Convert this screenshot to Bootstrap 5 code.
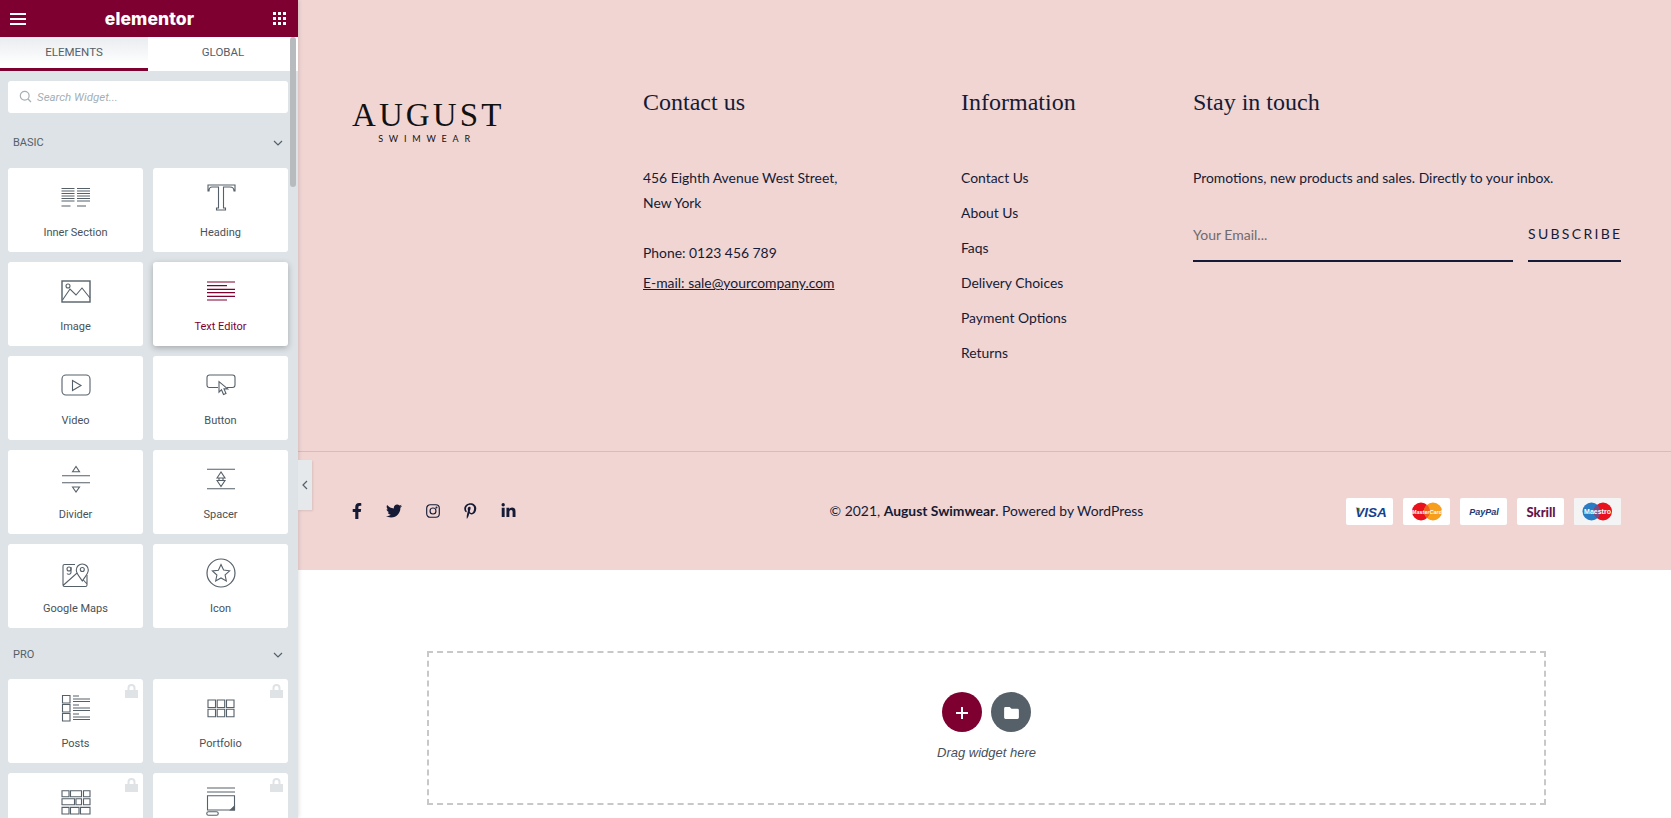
<!DOCTYPE html>
<html lang="en">
<head>
  <meta charset="UTF-8" />
  <meta name="viewport" content="width=device-width, initial-scale=1" />
  <title>Elementor - August Swimwear</title>
  <link href="https://cdn.jsdelivr.net/npm/bootstrap@5.3.0/dist/css/bootstrap.min.css" rel="stylesheet" />
  <style>
    html, body { height: 100%; overflow: hidden; background: #fff; }

    /* Editor panel */
    .ed-panel { width: 298px; background: #dee3e7; font-family: Roboto, sans-serif; color: #556068; box-shadow: 1px 0 4px rgba(0,0,0,.12); z-index: 2; }
    .ed-head { height: 37px; background: #7e0030; color: #fff; padding: 0 12px 0 10px; }
    .ed-logo { font-family: Inter, sans-serif; font-weight: 800; font-size: 17.5px; letter-spacing: .1px; line-height: 1; }
    .ed-tabs .nav-link { height: 34px; padding: 0; line-height: 31px; font-size: 11.5px; color: #556068; background: #fff; border-radius: 0; }
    .ed-tabs .ed-tab-on { background: linear-gradient(#e9ecef, #fff 90%); border-bottom: 3px solid #7e0030; }
    .ed-tab-a { width: 148px; }
    .ed-tab-b { width: 150px; }
    .ed-search { margin: 10px 10px 0 8px; height: 32px; }
    .ed-search svg { position: absolute; left: 11px; top: 9px; }
    .ed-search .form-control { height: 32px; border: 0; border-radius: 3px; padding: 0 0 0 29px; font-size: 11.5px; font-style: italic; }
    .ed-search .form-control::placeholder { color: #a4afb7; opacity: 1; }
    .ed-cat { height: 55px; padding: 5px 15px 0 13px; font-size: 11px; color: #556068; }
    .ed-cat-pro { height: 51px; padding-top: 3px; }
    .ed-grid { display: grid; grid-template-columns: 135px 135px; gap: 10px; padding-left: 8px; }
    .ed-widget { height: 84px; background: #fff; border-radius: 3px; padding-top: 14px; text-align: center; font-size: 11px; color: #495157; position: relative; }
    .ed-widget svg.ed-ico { display: block; margin: 0 auto 13px; fill: none; stroke: #556068; stroke-width: 1.1; }
    .ed-widget.ed-hot { color: #7e0030; box-shadow: 0 2px 6px rgba(0,0,0,.25); }
    .ed-widget.ed-hot svg.ed-ico { stroke: #7e0030; }
    .ed-lock { position: absolute; top: 5px; right: 5px; }
    .ed-scroll { position: absolute; left: 290px; top: 37px; width: 6px; height: 150px; border-radius: 3px; background: #b7bbbe; z-index: 4; }
    .ed-toggle { position: absolute; left: 298px; top: 460px; width: 14px; height: 50px; background: #e6e9ec; box-shadow: 1px 1px 2px rgba(0,0,0,.1); z-index: 3; }

    /* Site footer */
    .site-main { min-width: 0; }
    .site-foot { height: 570px; background: #f0d5d3; color: #151b36; font-family: Lato, sans-serif; font-size: 13.9px; }
    .site-cols { height: 452px; padding: 87px 50px 0 54px; border-bottom: 1px solid #dfb9b7; }
    .site-col-a { width: 291px; }
    .site-col-b { width: 318px; }
    .site-col-c { width: 232px; }
    .site-col-d { width: 428px; }
    .site-brand { margin-top: 13px; width: 150px; color: #111; text-align: center; font-family: "Liberation Serif", serif; }
    .site-brand b { display: block; font-weight: 400; font-size: 33px; line-height: 30px; letter-spacing: 3.1px; white-space: nowrap; }
    .site-brand span { display: block; font-family: Lato, sans-serif; font-size: 9px; line-height: 12px; letter-spacing: 5.8px; margin-top: 3px; }
    .site-h { font-family: "Liberation Serif", serif; font-size: 24px; line-height: 30px; font-weight: 400; margin: 0 0 48px; white-space: nowrap; }
    .site-foot p { line-height: 25px; margin: 0; }
    .site-foot a { color: inherit; }
    .site-foot .site-phone { margin-top: 25px; }
    .site-foot .site-mail { margin-top: 5px; }
    .site-links a { display: block; height: 35px; line-height: 25px; text-decoration: none; }
    .site-form { margin-top: 27px; gap: 15px; }
    .site-email { width: 320px; height: 45px; border-bottom: 2px solid #151b36; }
    .site-email .form-control { background: transparent; border: 0; border-radius: 0; padding: 0; height: 35px; font-size: 14px; color: #151b36; box-shadow: none; }
    .site-email .form-control::placeholder { color: #6f6a6d; opacity: 1; }
    .site-sub { width: 93px; height: 45px; border: 0; border-bottom: 2px solid #151b36; border-radius: 0; padding: 0 0 10px; font-size: 14px; letter-spacing: 2.3px; color: #151b36; text-align: left; white-space: nowrap; font-family: Lato, sans-serif; }
    .site-bar { height: 118px; padding: 0 50px 0 54px; }
    .site-third { flex: 1 1 0; }
    .site-social { gap: 24px; }
    .site-social svg { display: block; height: 16px; fill: #151b36; }
    .site-soc-f { width: 10px; }
    .site-soc-t { width: 16px; }
    .site-soc-i { width: 14px; fill: none !important; stroke: #151b36; stroke-width: 1.3; }
    .site-soc-p { width: 12.5px; }
    .site-soc-l { width: 15px; }
    .site-pays { gap: 10px; }
    .site-pay { width: 47px; height: 27px; background: #fff; border-radius: 2px; overflow: hidden; }
    .site-pay svg { display: block; }

    /* Drop zone */
    .drop-wrap { padding: 81px 125px 0 129px; }
    .drop-zone { height: 154px; border: 2px dashed #c8c8c8; padding-top: 39px; text-align: center; font-family: "Liberation Sans", sans-serif; font-style: italic; font-size: 13px; color: #495157; }
    .drop-btns { gap: 9px; }
    .drop-btn { width: 40px; height: 40px; padding: 0; border: 0; }
    .drop-add { background: #7e0030; }
    .drop-tpl { background: #556068; }
    .drop-zone p { margin: 13px 0 0; line-height: 16px; }
  </style>
</head>
<body class="d-flex">
  <!-- Editor panel -->
  <aside class="ed-panel flex-shrink-0 h-100 overflow-hidden">
    <div class="ed-head d-flex align-items-center justify-content-between">
      <svg width="16" height="14" viewBox="0 0 16 14" fill="#fff"><rect y="1" width="16" height="2"/><rect y="6" width="16" height="2"/><rect y="11" width="16" height="2"/></svg>
      <span class="ed-logo">elementor</span>
      <svg width="13" height="13" viewBox="0 0 13 13" fill="#fff"><rect width="3" height="3"/><rect x="5" width="3" height="3"/><rect x="10" width="3" height="3"/><rect y="5" width="3" height="3"/><rect x="5" y="5" width="3" height="3"/><rect x="10" y="5" width="3" height="3"/><rect y="10" width="3" height="3"/><rect x="5" y="10" width="3" height="3"/><rect x="10" y="10" width="3" height="3"/></svg>
    </div>
    <ul class="nav ed-tabs">
      <li class="nav-item ed-tab-a"><a class="nav-link ed-tab-on text-center" href="#">ELEMENTS</a></li>
      <li class="nav-item ed-tab-b"><a class="nav-link text-center" href="#">GLOBAL</a></li>
    </ul>
    <div class="ed-search position-relative">
      <svg width="13" height="13" viewBox="0 0 13 13" fill="none" stroke="#a4afb7" stroke-width="1.2"><circle cx="5.7" cy="5.7" r="4.4"/><path d="M9 9l3 3"/></svg>
      <input class="form-control" placeholder="Search Widget..." />
    </div>
    <div class="ed-cat d-flex align-items-center justify-content-between">BASIC
      <svg width="10" height="6" viewBox="0 0 10 6" fill="none" stroke="#556068" stroke-width="1.2"><path d="M1 1l4 4 4-4"/></svg>
    </div>
    <div class="ed-grid">
      <div class="ed-widget">
        <svg class="ed-ico" width="30" height="30" viewBox="0 0 30 30"><path d="M.5 6.500h13M.5 9h13M.5 11.500h13M.5 14h13M.5 16.500h13M.5 19h13M.5 24h9M16 6.500h13M16 9h13M16 11.500h13M16 14h13M16 16.500h13M16 19h13M16 24h9"/></svg>
        Inner Section
      </div>
      <div class="ed-widget">
        <svg class="ed-ico" width="30" height="30" viewBox="0 0 30 30"><path d="M2 3h27v6h-1c0-2.500-1.500-4-4-4h-6.500v21h2v2h-9v-2h2V5H6C3.500 5 3 6.500 3 9H2z"/></svg>
        Heading
      </div>
      <div class="ed-widget">
        <svg class="ed-ico" width="30" height="30" viewBox="0 0 30 30"><rect x="1" y="5" width="28" height="21" stroke-width="1.4"/><circle cx="7" cy="10" r="2"/><path d="M1.500 24L9 13l6 6 6-7 8 10"/></svg>
        Image
      </div>
      <div class="ed-widget ed-hot">
        <svg class="ed-ico" width="30" height="30" viewBox="0 0 30 30"><path d="M1 6h28M1 9.700h20M1 13.300h28M1 16.700h28M1 20.300h28M1 24h20" stroke-width="1.2"/></svg>
        Text Editor
      </div>
      <div class="ed-widget">
        <svg class="ed-ico" width="30" height="30" viewBox="0 0 30 30"><rect x="1" y="5" width="28" height="20" rx="4"/><path d="M11.500 10.500l8.500 5-8.500 5z"/></svg>
        Video
      </div>
      <div class="ed-widget">
        <svg class="ed-ico" width="30" height="30" viewBox="0 0 30 30"><path d="M12 17.500H3.500A2.500 2.500 0 0 1 1 15V7.500A2.500 2.500 0 0 1 3.500 5h23A2.500 2.500 0 0 1 29 7.500V15a2.500 2.500 0 0 1-2.500 2.500H21"/><path d="M13 11.700v10.500l2.500-2.500 2 4.800 2.500-1-2-4.600h3.700z"/></svg>
        Button
      </div>
      <div class="ed-widget">
        <svg class="ed-ico" width="30" height="30" viewBox="0 0 30 30"><path d="M1 11.700h28M1 18.700h28M11.500 7.700L15 2.500l3.500 5.200zM11.500 23L15 28l3.500-5z"/></svg>
        Divider
      </div>
      <div class="ed-widget">
        <svg class="ed-ico" width="30" height="30" viewBox="0 0 30 30"><path d="M1 5.300h28M1 24.700h28M11 14l4-6 4 6zM11 16.500l4 6 4-6zM13 14h4v2.500h-4z"/></svg>
        Spacer
      </div>
      <div class="ed-widget">
        <svg class="ed-ico" width="30" height="30" viewBox="0 0 30 30"><path d="M14 6.500H3.500A1.500 1.500 0 0 0 2 8v19a1.500 1.500 0 0 0 1.500 1.500h21A1.500 1.500 0 0 0 26 27V17M2 27.500l14-12.500 10 11"/><circle cx="8" cy="11" r="2"/><path d="M10 9v5.500c0 2-3 2.200-4 1"/><path d="M21.300 23c-3-4.500-6-7.500-6-11a6 6 0 0 1 12 0c0 3.500-3 6.500-6 11z" fill="#fff"/><circle cx="21.300" cy="11.500" r="2"/></svg>
        Google Maps
      </div>
      <div class="ed-widget">
        <svg class="ed-ico" width="30" height="30" viewBox="0 0 30 30"><circle cx="15" cy="15" r="14" stroke-width="1.200"/><path d="M15 6.500l2.600 5.600 6 .7-4.500 4.100 1.200 6L15 20l-5.300 3 1.200-6-4.500-4.100 6-.7z"/></svg>
        Icon
      </div>
    </div>
    <div class="ed-cat ed-cat-pro d-flex align-items-center justify-content-between">PRO
      <svg width="10" height="6" viewBox="0 0 10 6" fill="none" stroke="#556068" stroke-width="1.2"><path d="M1 1l4 4 4-4"/></svg>
    </div>
    <div class="ed-grid">
      <div class="ed-widget">
        <svg class="ed-lock" width="13" height="14" viewBox="0 0 13 14" fill="#dfe3e6"><path d="M2.500 6V4a4 4 0 0 1 8 0v2H13v8H0V6zm2 0h4V4a2 2 0 0 0-4 0z"/></svg>
        <svg class="ed-ico" width="30" height="30" viewBox="0 0 30 30"><path d="M1.500 2.500h7.500v7.500H1.500zM1.500 11.500h7.500v7.500H1.500zM1.500 20.500h7.500v7.500H1.500zM12 3h6M12 6h17M12 8.500h17M12 12h6M12 15h17M12 17.500h17M12 21h6M12 24h17M12 26.500h17"/></svg>
        Posts
      </div>
      <div class="ed-widget">
        <svg class="ed-lock" width="13" height="14" viewBox="0 0 13 14" fill="#dfe3e6"><path d="M2.500 6V4a4 4 0 0 1 8 0v2H13v8H0V6zm2 0h4V4a2 2 0 0 0-4 0z"/></svg>
        <svg class="ed-ico" width="30" height="30" viewBox="0 0 30 30"><path d="M2 7h7.500v7.500H2zM11.200 7h7.500v7.500h-7.500zM20.500 7H28v7.500h-7.500zM2 16.200h7.500v7.500H2zM11.200 16.200h7.500v7.500h-7.500zM20.500 16.200H28v7.500h-7.500z"/></svg>
        Portfolio
      </div>
      <div class="ed-widget">
        <svg class="ed-lock" width="13" height="14" viewBox="0 0 13 14" fill="#dfe3e6"><path d="M2.500 6V4a4 4 0 0 1 8 0v2H13v8H0V6zm2 0h4V4a2 2 0 0 0-4 0z"/></svg>
        <svg class="ed-ico" width="30" height="30" viewBox="0 0 30 30"><path d="M1 3.700h7v6H1zM9.500 3.700h11v6h-11zM22.500 3.700H29v6h-6.500zM1 11.700h12.500v6H1zM15 11.700h5.500v6H15zM22.500 11.700H29v6h-6.500zM1 20.400h7V27H1zM9.500 20.400H18V27H9.500zM19.500 20.400H29V27h-9.500z"/></svg>
      </div>
      <div class="ed-widget">
        <svg class="ed-lock" width="13" height="14" viewBox="0 0 13 14" fill="#dfe3e6"><path d="M2.500 6V4a4 4 0 0 1 8 0v2H13v8H0V6zm2 0h4V4a2 2 0 0 0-4 0z"/></svg>
        <svg class="ed-ico" width="30" height="30" viewBox="0 0 30 30"><path d="M1 1h28M1 5h28M1.500 8.700h27V23h-27zM2.500 24.700h8a1.500 1.500 0 0 1 0 3.500h-8a1.500 1.500 0 0 1 0-3.500z"/><path d="M28.500 19v4h-4z" fill="#556068"/></svg>
      </div>
    </div>
  </aside>
  <div class="ed-scroll"></div>
  <div class="ed-toggle d-flex align-items-center justify-content-center">
    <svg width="6" height="10" viewBox="0 0 6 10" fill="none" stroke="#556068" stroke-width="1.2"><path d="M5 1L1 5l4 4"/></svg>
  </div>

  <!-- Page preview -->
  <main class="site-main flex-grow-1 h-100 overflow-hidden">
    <footer class="site-foot">
      <div class="site-cols d-flex">
        <div class="site-col-a">
          <div class="site-brand"><b>AUGUST</b><span>SWIMWEAR</span></div>
        </div>
        <div class="site-col-b">
          <h5 class="site-h">Contact us</h5>
          <p>456 Eighth Avenue West Street,<br />New York</p>
          <p class="site-phone">Phone: 0123 456 789</p>
          <p class="site-mail"><a href="#">E-mail: sale@yourcompany.com</a></p>
        </div>
        <div class="site-col-c">
          <h5 class="site-h">Information</h5>
          <div class="site-links">
            <a href="#">Contact Us</a>
            <a href="#">About Us</a>
            <a href="#">Faqs</a>
            <a href="#">Delivery Choices</a>
            <a href="#">Payment Options</a>
            <a href="#">Returns</a>
          </div>
        </div>
        <div class="site-col-d">
          <h5 class="site-h">Stay in touch</h5>
          <p>Promotions, new products and sales. Directly to your inbox.</p>
          <form class="site-form d-flex">
            <div class="site-email"><input class="form-control" placeholder="Your Email..." /></div>
            <button type="button" class="btn site-sub">SUBSCRIBE</button>
          </form>
        </div>
      </div>
      <div class="site-bar d-flex align-items-center">
        <div class="site-third site-social d-flex">
          <svg class="site-soc-f" viewBox="0 0 320 512"><path d="M279.140 288l14.220-92.660h-88.910v-60.130c0-25.350 12.420-50.060 52.240-50.060h40.420V6.260S260.430 0 225.360 0c-73.220 0-121.080 44.380-121.080 124.720v70.620H22.890V288h81.390v224h100.170V288z"/></svg>
          <svg class="site-soc-t" viewBox="0 0 512 512"><path d="M459.370 151.716c.325 4.548.325 9.097.325 13.645 0 138.720-105.583 298.558-298.558 298.558-59.452 0-114.680-17.219-161.137-47.106 8.447.974 16.568 1.299 25.340 1.299 49.055 0 94.213-16.568 130.274-44.832-46.132-.975-84.792-31.188-98.112-72.772 6.498.974 12.995 1.624 19.818 1.624 9.421 0 18.843-1.300 27.614-3.573-48.081-9.747-84.143-51.980-84.143-102.985v-1.299c13.969 7.797 30.214 12.670 47.431 13.319-28.264-18.843-46.781-51.005-46.781-87.391 0-19.492 5.197-37.360 14.294-52.954 51.655 63.675 129.300 105.258 216.365 109.807-1.624-7.797-2.599-15.918-2.599-24.040 0-57.828 46.782-104.934 104.934-104.934 30.213 0 57.502 12.670 76.670 33.137 23.715-4.548 46.456-13.320 66.599-25.340-7.798 24.366-24.366 44.833-46.132 57.827 21.117-2.273 41.584-8.122 60.426-16.243-14.292 20.791-32.161 39.308-52.628 54.253z"/></svg>
          <svg class="site-soc-i" viewBox="0 0 16 16"><rect x=".8" y=".8" width="14.400" height="14.400" rx="4"/><circle cx="8" cy="8" r="3.400"/><circle cx="12" cy="4" r=".5"/></svg>
          <svg class="site-soc-p" viewBox="0 0 384 512"><path d="M204 6.500C101.400 6.500 0 74.900 0 185.600 0 256 39.600 296 63.600 296c9.900 0 15.600-27.600 15.600-35.400 0-9.300-23.700-29.100-23.700-67.800 0-80.400 61.200-137.400 140.400-137.400 68.100 0 118.500 38.700 118.500 109.800 0 53.100-21.300 152.700-90.300 152.700-24.900 0-46.200-18-46.200-43.800 0-37.800 26.400-74.400 26.400-113.400 0-66.200-93.900-54.200-93.900 25.800 0 16.800 2.100 35.400 9.600 50.700-13.800 59.400-42 147.900-42 209.100 0 18.900 2.700 37.500 4.500 56.400 3.400 3.800 1.700 3.400 6.900 1.500 50.400-69 48.600-82.500 71.400-172.800 12.300 23.400 44.100 36 69.300 36 106.200 0 153.900-103.500 153.900-196.800C384 71.300 298.200 6.500 204 6.500z"/></svg>
          <svg class="site-soc-l" viewBox="0 0 448 512"><path d="M100.280 448H7.400V148.900h92.880zM53.790 108.100C24.090 108.100 0 83.500 0 53.800a53.790 53.790 0 0 1 107.580 0c0 29.700-24.100 54.300-53.790 54.300zM447.900 448h-92.680V302.400c0-34.700-.7-79.200-48.290-79.200-48.290 0-55.690 37.700-55.690 76.700V448h-92.780V148.900h89.080v40.800h1.300c12.400-23.500 42.690-48.300 87.880-48.300 94 0 111.280 61.900 111.280 142.300V448z"/></svg>
        </div>
        <div class="site-third text-center text-nowrap">© 2021, <strong>August Swimwear</strong>. Powered by WordPress</div>
        <div class="site-third site-pays d-flex justify-content-end">
          <div class="site-pay"><svg width="47" height="27" viewBox="0 0 47 27"><path d="M9.500 9l4.500 1 .5 5z" fill="#f2a900"/><text x="25" y="18.500" text-anchor="middle" font-family="Liberation Sans, sans-serif" font-weight="700" font-style="italic" font-size="13.500" fill="#14428f">VISA</text></svg></div>
          <div class="site-pay"><svg width="47" height="27" viewBox="0 0 47 27"><circle cx="18" cy="13.500" r="9" fill="#e8111c"/><circle cx="30" cy="13.500" r="9" fill="#f79e1b"/><path d="M24 6.800a9 9 0 0 1 0 13.400 9 9 0 0 1 0-13.400z" fill="#f0601a"/><text x="24" y="15.500" text-anchor="middle" font-family="Liberation Sans, sans-serif" font-weight="700" font-style="italic" font-size="5.500" fill="#fff">MasterCard</text></svg></div>
          <div class="site-pay"><svg width="47" height="27" viewBox="0 0 47 27"><text x="24" y="17" text-anchor="middle" font-family="Liberation Sans, sans-serif" font-weight="700" font-style="italic" font-size="9" fill="#1b3a78">PayPal</text></svg></div>
          <div class="site-pay"><svg width="47" height="27" viewBox="0 0 47 27"><text x="24" y="18.500" text-anchor="middle" font-family="Lato, sans-serif" font-weight="900" font-size="13" fill="#64144d">Skrill</text></svg></div>
          <div class="site-pay"><svg width="47" height="27" viewBox="0 0 47 27"><rect width="47" height="27" fill="#f4f4f4"/><circle cx="17.500" cy="13.500" r="9" fill="#2a7cc4"/><circle cx="29" cy="13.500" r="9" fill="#e8111c"/><path d="M23.200 6.600a9 9 0 0 1 0 13.800 9 9 0 0 1 0-13.800z" fill="#7a4a80"/><text x="23.500" y="15.800" text-anchor="middle" font-family="Liberation Sans, sans-serif" font-weight="700" font-size="7" fill="#fff">Maestro</text></svg></div>
        </div>
      </div>
    </footer>
    <section class="drop-wrap">
      <div class="drop-zone">
        <div class="drop-btns d-flex justify-content-center">
          <button type="button" class="btn drop-btn drop-add rounded-circle"><svg width="14" height="14" viewBox="0 0 14 14" stroke="#fff" stroke-width="2"><path d="M7 1v12M1 7h12"/></svg></button>
          <button type="button" class="btn drop-btn drop-tpl rounded-circle"><svg width="15" height="12" viewBox="0 0 16 13" fill="#fff"><path d="M1.500 0h4.500l2 2h6.500A1.500 1.500 0 0 1 16 3.500v8a1.500 1.500 0 0 1-1.500 1.500h-13A1.500 1.500 0 0 1 0 11.500v-10A1.500 1.500 0 0 1 1.500 0z"/></svg></button>
        </div>
        <p>Drag widget here</p>
      </div>
    </section>
  </main>
</body>
</html>
